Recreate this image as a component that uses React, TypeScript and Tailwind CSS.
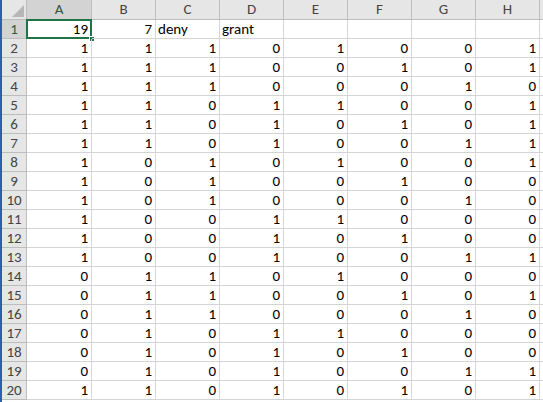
import React from "react";

const cols = ["A", "B", "C", "D", "E", "F", "G", "H"];
const data: (string | number | null)[][] = [
  [19, 7, "deny", "grant", null, null, null, null],
  [1, 1, 1, 0, 1, 0, 0, 1],
  [1, 1, 1, 0, 0, 1, 0, 1],
  [1, 1, 1, 0, 0, 0, 1, 0],
  [1, 1, 0, 1, 1, 0, 0, 1],
  [1, 1, 0, 1, 0, 1, 0, 1],
  [1, 1, 0, 1, 0, 0, 1, 1],
  [1, 0, 1, 0, 1, 0, 0, 1],
  [1, 0, 1, 0, 0, 1, 0, 0],
  [1, 0, 1, 0, 0, 0, 1, 0],
  [1, 0, 0, 1, 1, 0, 0, 0],
  [1, 0, 0, 1, 0, 1, 0, 0],
  [1, 0, 0, 1, 0, 0, 1, 1],
  [0, 1, 1, 0, 1, 0, 0, 0],
  [0, 1, 1, 0, 0, 1, 0, 1],
  [0, 1, 1, 0, 0, 0, 1, 0],
  [0, 1, 0, 1, 1, 0, 0, 0],
  [0, 1, 0, 1, 0, 1, 0, 0],
  [0, 1, 0, 1, 0, 0, 1, 1],
  [1, 1, 0, 1, 0, 1, 0, 1],
];

const font = { fontFamily: "Calibri, Carlito, Lato, 'Liberation Sans', sans-serif" };

export default function App() {
  return (
    <div
      className="flex w-[543px] h-[402px] overflow-hidden bg-white text-[15px] text-black"
      style={font}
    >
      <div className="w-[2px] shrink-0 bg-[#2b5fb4]" />
      <div className="flex-1 grid grid-cols-[25px_65px_64px_64px_64px_64px_64px_64px_64px_1fr] auto-rows-[19px] [grid-template-rows:20px]">
        {/* corner */}
        <div className="relative bg-[#e6e6e6] border-r border-b border-[#bdbdbd] h-[20px]">
          <div className="absolute right-[2px] bottom-[2px] w-0 h-0 border-l-[12px] border-l-transparent border-b-[12px] border-b-[#b7b7b7]" />
        </div>
        {cols.map((c, i) => (
          <div
            key={c}
            className={
              "h-[20px] flex items-center justify-center border-r border-b border-[#bdbdbd] " +
              (i === 0 ? "bg-[#d3d3d3] text-[#2e5a3c] border-b-[#a8a8a8]" : "bg-[#e6e6e6] text-[#444]")
            }
          >
            {c}
          </div>
        ))}
        <div className="h-[20px] bg-[#e6e6e6] border-b border-[#bdbdbd]" />
        {data.map((row, r) => (
          <React.Fragment key={r}>
            <div
              className={
                "flex items-center justify-center border-r border-b border-[#bdbdbd] " +
                (r === 0 ? "bg-[#d3d3d3] text-[#2e5a3c]" : "bg-[#e6e6e6] text-[#444]")
              }
            >
              {r + 1}
            </div>
            {row.map((v, c) => {
              const isText = typeof v === "string";
              const selected = r === 0 && c === 0;
              return (
                <div
                  key={c}
                  className={
                    "relative flex items-center border-r border-b border-[#d4d4d4] " +
                    (isText ? "justify-start pl-[2px]" : "justify-end pr-[3px]")
                  }
                >
                  <span className="leading-none whitespace-nowrap">{v === null ? "" : v}</span>
                  {selected && (
                    <>
                      <div className="absolute left-[-1px] top-[-1px] right-[-1px] bottom-[-1px] border-2 border-[#217346] pointer-events-none" />
                      <div className="absolute right-[-4px] bottom-[-4px] w-[6px] h-[6px] bg-[#217346] border border-white" />
                    </>
                  )}
                </div>
              );
            })}
            <div className="border-b border-[#d4d4d4]" />
          </React.Fragment>
        ))}
      </div>
    </div>
  );
}
